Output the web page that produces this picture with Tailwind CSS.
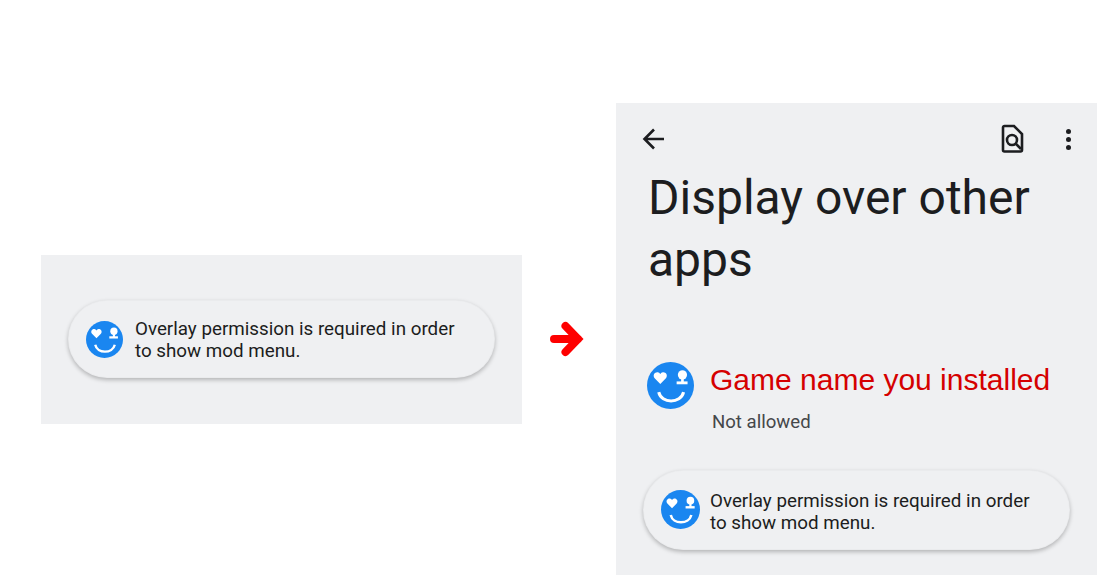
<!DOCTYPE html>
<html lang="en">

<head>
    <meta charset="UTF-8" />
    <title>Overlay permission</title>
    <script src="https://cdn.jsdelivr.net/npm/@tailwindcss/browser@4"></script>
</head>

<body class="bg-white h-[575px] overflow-hidden font-['Roboto',sans-serif] text-[#1c1d20]">
    <svg class="hidden">
        <symbol id="smiley" viewBox="0 0 46 46">
            <circle cx="23" cy="23" r="23" fill="#1a86f0" />
            <path d="M13 21.5 L7.5 16 C5 12.5 8 9.5 10.5 10 C11.5 10.2 12.5 10.8 13 11.8 C13.5 10.8 14.5 10.2 15.5 10 C18 9.5 21 12.5 18.5 16 Z" fill="#fff" />
            <circle cx="34.7" cy="12.6" r="4.5" fill="#fff" />
            <rect x="33.4" y="15" width="2.6" height="5" fill="#fff" />
            <rect x="29" y="19" width="10.7" height="2.8" fill="#fff" />
            <path d="M11.5 29.5 C14 41 33 41 35.8 29.5" fill="none" stroke="#fff" stroke-width="3" />
        </symbol>
    </svg>

    <div class="flex items-start">
        <!-- left panel -->
        <div class="ml-[41px] mt-[255px] w-[481px] h-[169px] bg-[#eff0f2] pt-[45px] pl-[27px]">
            <div class="w-[427px] h-[78px] rounded-[39px] bg-[#eff0f2] border border-black/[0.02] shadow-[0_2px_4px_rgba(0,0,0,0.25)] flex items-center pl-[17px] gap-3">
                <svg class="w-[37px] h-[37px] shrink-0"><use href="#smiley" /></svg>
                <p class="text-[18.8px] leading-[22px] mt-[2px]">Overlay permission is required in order<br />to show mod menu.</p>
            </div>
        </div>

        <!-- arrow -->
        <svg class="ml-[28px] mt-[321px] w-[34px] h-[38px] shrink-0" viewBox="0 0 34 38">
            <path d="M4 18 H28 M15.5 5 L28 18 L15.5 31" fill="none" stroke="#fe0000" stroke-width="8" stroke-linecap="round" stroke-linejoin="miter" />
        </svg>

        <!-- right panel -->
        <div class="ml-[32px] mt-[103px] w-[481px] h-[472px] bg-[#eff0f2] flex flex-col">
            <div class="h-[72px] flex items-center justify-between pl-[26px] pr-[26px] shrink-0">
                <svg class="w-6 h-6" viewBox="0 0 24 24"><path d="M22 12 H3.5 M12 2.5 L2.5 12 L12 21.5" fill="none" stroke="#1c1d20" stroke-width="2.6" /></svg>
                <div class="flex items-center gap-[42px]">
                    <svg class="w-[24px] h-[30px]" viewBox="0 0 24 30"><path d="M3 3.5 a1.5 1.5 0 0 1 1.5-1.5 H14 L22 10 V26 a1.5 1.5 0 0 1-1.5 1.5 H4.5 a1.5 1.5 0 0 1-1.5-1.5 Z" fill="none" stroke="#1c1d20" stroke-width="2.6" /><circle cx="12" cy="16" r="5" fill="none" stroke="#1c1d20" stroke-width="2.6" /><path d="M15.5 19.5 L21 25" stroke="#1c1d20" stroke-width="2.6" /></svg>
                    <div class="flex flex-col gap-[3px]">
                        <span class="w-[5px] h-[5px] rounded-full bg-[#1c1d20]"></span>
                        <span class="w-[5px] h-[5px] rounded-full bg-[#1c1d20]"></span>
                        <span class="w-[5px] h-[5px] rounded-full bg-[#1c1d20]"></span>
                    </div>
                </div>
            </div>
            <h1 class="ml-[32px] text-[48px] leading-[62px] -mt-[8px] w-[420px]">Display over other apps</h1>
            <div class="flex mt-[71px] ml-[31px] items-start gap-4">
                <svg class="w-[47px] h-[47px] shrink-0"><use href="#smiley" /></svg>
                <div>
                    <p class="text-[30px] leading-[36px] text-[#d50000] font-['Liberation_Sans',sans-serif]">Game name you installed</p>
                    <p class="text-[18.6px] leading-[24px] text-[#45474a] mt-[12px] ml-[2px]">Not allowed</p>
                </div>
            </div>
            <div class="ml-[27px] mt-[36px] w-[427px] h-[80px] rounded-[40px] bg-[#eff0f2] border border-black/[0.02] shadow-[0_2px_4px_rgba(0,0,0,0.25)] flex items-center pl-[17px] gap-2.5">
                <svg class="w-[39px] h-[39px] shrink-0 mt-[-1px]"><use href="#smiley" /></svg>
                <p class="text-[18.8px] leading-[22px] mt-[3px]">Overlay permission is required in order<br />to show mod menu.</p>
            </div>
        </div>
    </div>
</body>

</html>
